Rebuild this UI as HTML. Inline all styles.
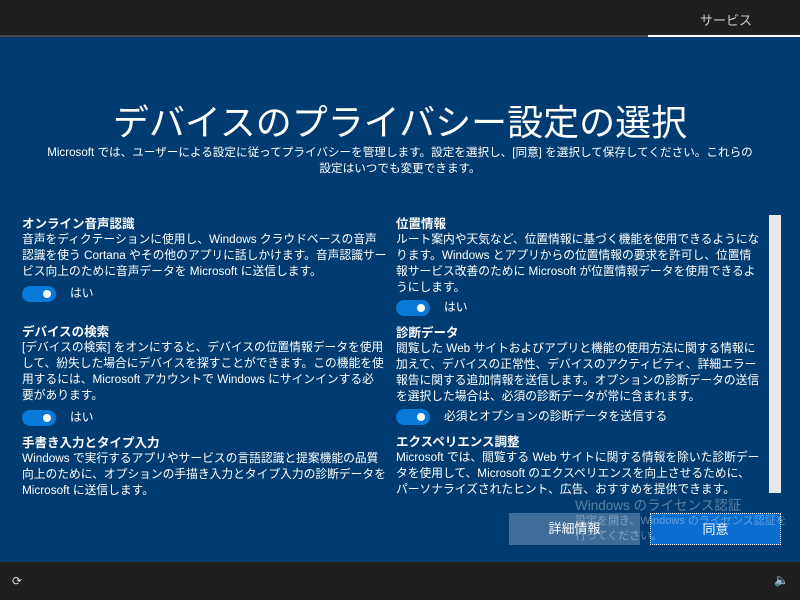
<!DOCTYPE html>
<html><head><meta charset="utf-8"><style>
*{margin:0;padding:0;box-sizing:border-box}
body{width:800px;height:600px;overflow:hidden;background:#003c71;font-family:"Liberation Sans","Noto Sans CJK JP",sans-serif;color:#fff;position:relative}
.top{position:absolute;left:0;top:0;width:800px;height:36px;background:#1f1f1f}
.top .line{position:absolute;left:0;top:35px;width:800px;height:2px;background:#4a4a4a}
.top .sel{position:absolute;left:648px;top:35px;width:152px;height:2px;background:#fff}
.top .tab{position:absolute;left:700px;top:10px;font-size:13px;color:#ccc}
.bot{position:absolute;left:0;top:562px;width:800px;height:38px;background:#1f1f1f}
h1{position:absolute;left:0;width:800px;top:94px;text-align:center;font-size:36px;font-weight:normal}
.sub{position:absolute;left:30px;width:740px;top:145px;font-size:11.6px;line-height:16px;text-align:center}
.col{position:absolute;top:216px;font-size:11.75px;line-height:16px;white-space:nowrap}
.col h3{font-size:12.5px;font-weight:bold}
.tg{display:flex;align-items:center;height:16px;margin:6px 0 22px}
.sw{width:34px;height:16px;border-radius:8px;background:#0a78d7;position:relative;margin-right:14px}
.sw:after{content:"";position:absolute;right:5px;top:4px;width:8px;height:8px;border-radius:50%;background:#fff}
.sb{position:absolute;left:769px;top:215px;width:12px;height:278px;background:#e8e8e8}
.btn{position:absolute;top:513px;height:32px;width:131px;font-size:13px;text-align:center;line-height:32px}
.wm{position:absolute;color:rgba(255,255,255,.35);white-space:nowrap}
</style></head><body>
<div class="top"><div class="line"></div><div class="sel"></div><div class="tab">サービス</div></div>
<h1>デバイスのプライバシー設定の選択</h1>
<div class="sub">Microsoft では、ユーザーによる設定に従ってプライバシーを管理します。設定を選択し、[同意] を選択して保存してください。これらの<br>設定はいつでも変更できます。</div>
<div class="col" style="left:22px">
<h3>オンライン音声認識</h3>
<div>音声をディクテーションに使用し、Windows クラウドベースの音声<br>認識を使う Cortana やその他のアプリに話しかけます。音声認識サー<br>ビス向上のために音声データを Microsoft に送信します。</div>
<div class="tg"><div class="sw"></div>はい</div>
<h3>デバイスの検索</h3>
<div>[デバイスの検索] をオンにすると、デバイスの位置情報データを使用<br>して、紛失した場合にデバイスを探すことができます。この機能を使<br>用するには、Microsoft アカウントで Windows にサインインする必<br>要があります。</div>
<div class="tg" style="margin-bottom:9px"><div class="sw"></div>はい</div>
<h3>手書き入力とタイプ入力</h3>
<div>Windows で実行するアプリやサービスの言語認識と提案機能の品質<br>向上のために、オプションの手描き入力とタイプ入力の診断データを<br>Microsoft に送信します。</div>
</div>
<div class="col" style="left:396px">
<h3>位置情報</h3>
<div>ルート案内や天気など、位置情報に基づく機能を使用できるようにな<br>ります。Windows とアプリからの位置情報の要求を許可し、位置情<br>報サービス改善のために Microsoft が位置情報データを使用できるよ<br>うにします。</div>
<div class="tg" style="margin-top:4px;margin-bottom:9px"><div class="sw"></div>はい</div>
<h3>診断データ</h3>
<div>閲覧した Web サイトおよびアプリと機能の使用方法に関する情報に<br>加えて、デバイスの正常性、デバイスのアクティビティ、詳細エラー<br>報告に関する追加情報を送信します。オプションの診断データの送信<br>を選択した場合は、必須の診断データが常に含まれます。</div>
<div class="tg" style="margin-top:4px;margin-bottom:9px"><div class="sw"></div>必須とオプションの診断データを送信する</div>
<h3>エクスペリエンス調整</h3>
<div>Microsoft では、閲覧する Web サイトに関する情報を除いた診断デー<br>タを使用して、Microsoft のエクスペリエンスを向上させるために、<br>パーソナライズされたヒント、広告、おすすめを提供できます。</div>
</div>
<div class="sb"></div>
<div class="btn" style="left:509px;background:#3f6d97">詳細情報</div>
<div class="btn" style="left:650px;background:#0a6ed1;border:1px dotted #fff">同意</div>
<div class="wm" style="left:575px;top:494px;font-size:13.5px">Windows のライセンス認証</div>
<div class="wm" style="left:575px;top:514px;font-size:11px;line-height:15px">設定を開き、Windows のライセンス認証を<br>行ってください。</div>
<div class="bot"><span style="position:absolute;left:12px;top:12px;font-size:12px;color:#ddd">⟳</span><span style="position:absolute;left:774px;top:11px;font-size:12px;color:#ddd">🔈</span></div>
</body></html>
